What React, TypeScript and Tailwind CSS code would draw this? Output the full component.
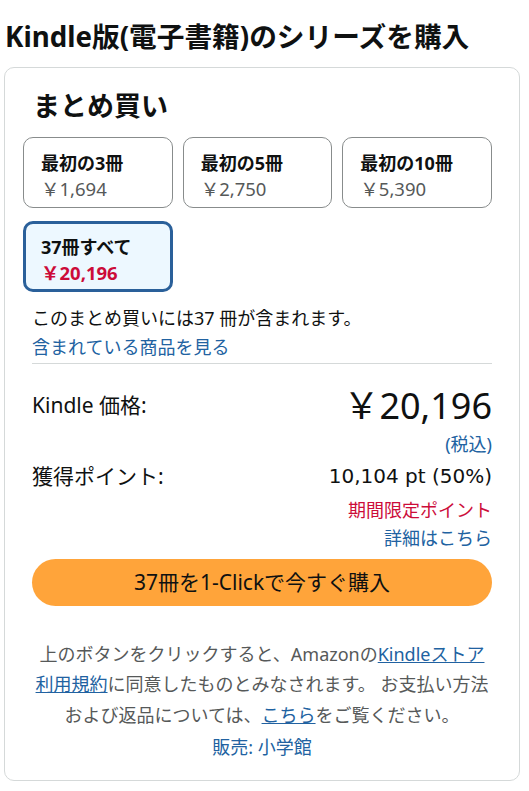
import React from "react";

type Bundle = {
  label: string;
  price: string;
  selected?: boolean;
};

const bundles: Bundle[] = [
  { label: "最初の3冊", price: "￥1,694" },
  { label: "最初の5冊", price: "￥2,750" },
  { label: "最初の10冊", price: "￥5,390" },
  { label: "37冊すべて", price: "￥20,196", selected: true }
];

function BundleTile({ bundle }: { bundle: Bundle }) {
  if (bundle.selected) {
    return (
      <button className="h-[71px] rounded-[10px] border-[3px] border-[#2a609a] bg-[#edf8ff] pl-[15px] pt-[6px] text-left">
        <p className="text-[18px] font-bold leading-[26px] text-[#0f1111]">{bundle.label}</p>
        <p className="text-[18.5px] font-bold leading-[26px] text-[#cc0c39]">{bundle.price}</p>
      </button>
    );
  }
  return (
    <button className="h-[71px] rounded-[10px] border border-[#888c8c] bg-white pl-[17px] pt-[7px] text-left">
      <p className="text-[18px] font-bold leading-[26px] text-[#0f1111]">{bundle.label}</p>
      <p className="text-[18.5px] leading-[26px] text-[#565959]">{bundle.price}</p>
    </button>
  );
}

export default function App() {
  return (
    <div className="min-h-[791px] w-[529px] bg-white text-[#0f1111] [font-family:'Noto_Sans','Noto_Sans_CJK_JP',sans-serif]">
      <h1 className="pl-[5px] pt-[19px] text-[27.7px] font-bold leading-[34px]">
        Kindle版(電子書籍)のシリーズを購入
      </h1>

      <div className="ml-[4px] mt-[14px] w-[516px] rounded-[10px] border border-[#d5d9d9] px-[27px] pb-[17px] pt-[21px]">
        <h2 className="pl-[1px] text-[27px] font-bold leading-[34px]">まとめ買い</h2>

        <div className="-ml-[9px] mt-[14px] grid grid-cols-3 gap-x-[10px] gap-y-[13px]">
          {bundles.map((b) => (
            <BundleTile key={b.label} bundle={b} />
          ))}
        </div>

        <p className="mt-[12px] text-[18px] leading-[29px]">このまとめ買いには37 冊が含まれます。</p>
        <a className="block text-[18px] leading-[29px] text-[#2162a1]">含まれている商品を見る</a>
        <div className="mt-[1px] h-px bg-[#d5d9d9]" />

        <div className="mt-[20px] flex items-start justify-between">
          <span className="mt-[7px] text-[21px] leading-[29px]">Kindle 価格:</span>
          <span className="text-[36px] leading-[44px]">￥20,196</span>
        </div>
        <p className="mt-[2px] text-right text-[18px] leading-[29px] text-[#2162a1]">(税込)</p>

        <div className="mt-[3px] flex items-start justify-between">
          <span className="text-[21px] leading-[29px]">獲得ポイント:</span>
          <span className="text-[20px] leading-[29px] [font-family:'DejaVu_Sans','Noto_Sans_CJK_JP',sans-serif]">
            10,104 pt (50%)
          </span>
        </div>
        <p className="mt-[5px] text-right text-[18px] leading-[28px] text-[#cc0c39]">期間限定ポイント</p>
        <p className="text-right text-[18px] leading-[29px] text-[#2162a1]">詳細はこちら</p>

        <button className="mt-[6px] flex h-[47px] w-full items-center justify-center rounded-full bg-[#ffa43a] text-[21px] text-[#0f1111]">
          37冊を1-Clickで今すぐ購入
        </button>

        <p className="mt-[33px] text-center text-[18px] leading-[30.4px] text-[#565959]">
          上のボタンをクリックすると、Amazonの
          <a className="text-[#2162a1] underline">
            Kindleストア
            <br />
            利用規約
          </a>
          に同意したものとみなされます。 お支払い方法
          <br />
          および返品については、<a className="text-[#2162a1] underline">こちら</a>をご覧ください。
        </p>
        <p className="mt-[2px] text-center text-[18px] leading-[30.4px] text-[#2162a1]">販売: 小学館</p>
      </div>
    </div>
  );
}
